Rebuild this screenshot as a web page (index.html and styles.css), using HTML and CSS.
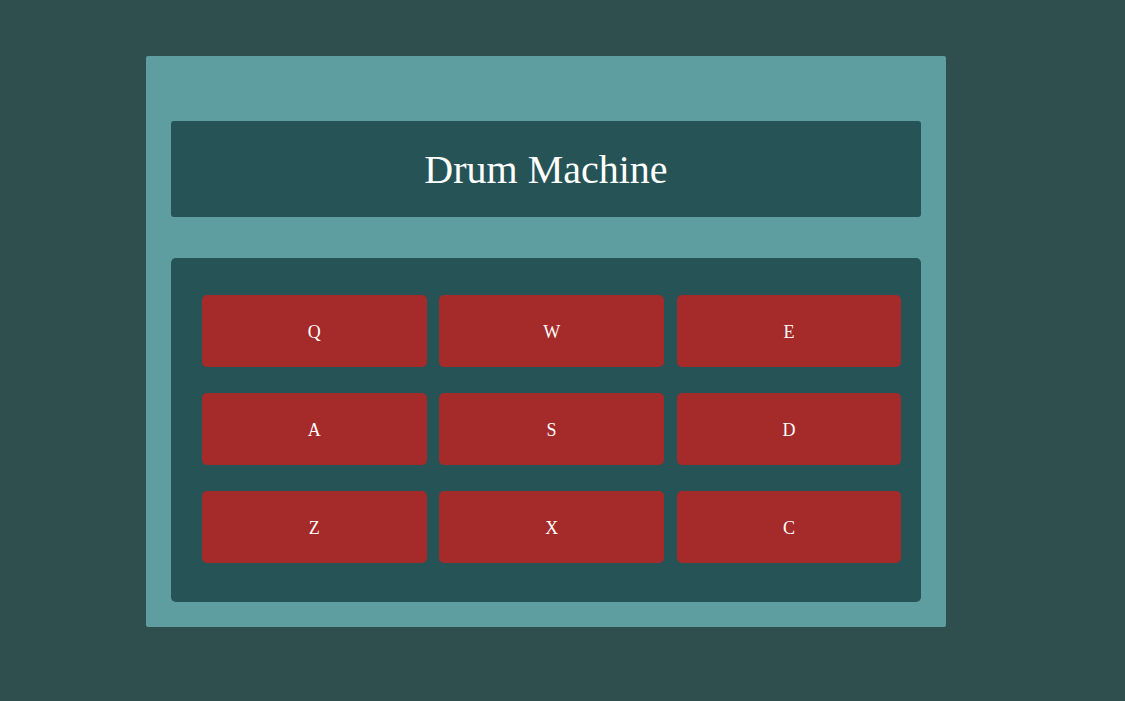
FILE: index.html
```html
<!DOCTYPE html>
<html>
<head>
<meta charset="utf-8">
<title>Drum Machine</title>
<link rel="stylesheet" href="styles.css">
</head>
<body>
<div class="page">
  <div class="machine">
    <div class="display">Drum Machine</div>
    <div class="pad-bank">
      <div class="drum-pad">Q</div>
      <div class="drum-pad">W</div>
      <div class="drum-pad">E</div>
      <div class="drum-pad">A</div>
      <div class="drum-pad">S</div>
      <div class="drum-pad">D</div>
      <div class="drum-pad">Z</div>
      <div class="drum-pad">X</div>
      <div class="drum-pad">C</div>
    </div>
  </div>
</div>
</body>
</html>
```

FILE: styles.css
```css
html, body {
  margin: 0;
  padding: 0;
  background: #2f4f4f;
  height: 100%;
}
body {
  font-family: "Liberation Serif", "Times New Roman", serif;
  color: #ffffff;
}
.page {
  padding-top: 56px;
  padding-left: 146px;
}
.machine {
  width: 750px;
  height: 506px;
  padding: 65px 25px 0 25px;
  background: #5f9ea0;
  border-radius: 2px;
  display: flex;
  flex-direction: column;
  gap: 41px;
}
.display {
  height: 96px;
  background: #255356;
  border-radius: 3px;
  display: flex;
  align-items: center;
  justify-content: center;
  font-size: 40px;
  padding-top: 1px;
  box-sizing: border-box;
}
.pad-bank {
  height: 344px;
  box-sizing: border-box;
  background: #255356;
  border-radius: 5px;
  padding: 37px 19px 0 31px;
  display: grid;
  grid-template-columns: repeat(3, 224.7px);
  grid-auto-rows: 72px;
  column-gap: 12.6px;
  row-gap: 26px;
  align-content: start;
}
.drum-pad {
  background: #a52a2a;
  border-radius: 5px;
  display: flex;
  align-items: center;
  justify-content: center;
  font-size: 18px;
  padding-top: 2px;
  box-sizing: border-box;
}
```
